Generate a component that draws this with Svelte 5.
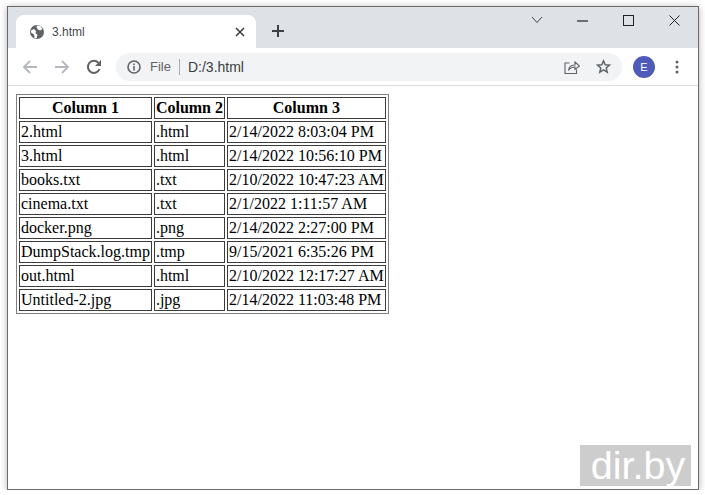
<script>
  const rows = [
    ['2.html', '.html', '2/14/2022 8:03:04 PM'],
    ['3.html', '.html', '2/14/2022 10:56:10 PM'],
    ['books.txt', '.txt', '2/10/2022 10:47:23 AM'],
    ['cinema.txt', '.txt', '2/1/2022 1:11:57 AM'],
    ['docker.png', '.png', '2/14/2022 2:27:00 PM'],
    ['DumpStack.log.tmp', '.tmp', '9/15/2021 6:35:26 PM'],
    ['out.html', '.html', '2/10/2022 12:17:27 AM'],
    ['Untitled-2.jpg', '.jpg', '2/14/2022 11:03:48 PM']
  ];
</script>

<div class="window">
  <div class="tabstrip">
    <div class="tab">
      <svg class="globe" width="16" height="16" viewBox="0 0 16 16">
        <circle cx="8" cy="8" r="7" fill="#5f6368" />
        <path d="M2 6.5 L5 5 L7 7 L6.5 9 L8.5 11 L7.5 14.5 L5.5 14 L5 10.5 L2 8.5 Z M8 1.5 L11.5 2 L13.5 5 L11 6.5 L9 5.5 L7.5 3.5 Z" fill="#fff" />
      </svg>
      <span class="tabtitle">3.html</span>
      <svg class="tabclose" width="10" height="10" viewBox="0 0 10 10">
        <path d="M1 1 L9 9 M9 1 L1 9" stroke="#3c4043" stroke-width="1.6" fill="none" />
      </svg>
    </div>
    <svg class="newtab" width="14" height="14" viewBox="0 0 14 14">
      <path d="M7 1 V13 M1 7 H13" stroke="#3c4043" stroke-width="2" fill="none" />
    </svg>
    <div class="winctrls">
      <svg class="chev" width="12" height="8" viewBox="0 0 12 8"><path d="M1 1 L6 6.5 L11 1" stroke="#444" fill="none" /></svg>
      <svg class="min" width="11" height="2" viewBox="0 0 11 2"><path d="M0 1 H11" stroke="#222" stroke-width="1.2" /></svg>
      <svg class="max" width="11" height="11" viewBox="0 0 11 11"><rect x="0.5" y="0.5" width="10" height="10" stroke="#222" fill="none" /></svg>
      <svg class="cls" width="11" height="11" viewBox="0 0 11 11"><path d="M0.5 0.5 L10.5 10.5 M10.5 0.5 L0.5 10.5" stroke="#222" fill="none" /></svg>
    </div>
  </div>
  <div class="toolbar">
    <svg class="nav" width="16" height="16" viewBox="0 0 16 16"><path d="M15 8 H2 M8 2 L2 8 L8 14" stroke="#b4b7bb" stroke-width="1.8" fill="none" /></svg>
    <svg class="nav" width="16" height="16" viewBox="0 0 16 16"><path d="M1 8 H14 M8 2 L14 8 L8 14" stroke="#b4b7bb" stroke-width="1.8" fill="none" /></svg>
    <svg class="nav" width="16" height="16" viewBox="0 0 16 16"><path d="M13.5 10 A6 6 0 1 1 12.3 3.8" stroke="#5f6368" stroke-width="2" fill="none" /><path d="M15 1 V7 H9 Z" fill="#5f6368" /></svg>
    <div class="omnibox">
      <svg width="14" height="14" viewBox="0 0 14 14">
        <circle cx="7" cy="7" r="6" stroke="#5f6368" stroke-width="1.6" fill="none" />
        <path d="M7 6 V10.5 M7 3.4 V5" stroke="#5f6368" stroke-width="1.6" fill="none" />
      </svg>
      <span class="file">File</span>
      <span class="sep"></span>
      <span class="url">D:/3.html</span>
      <span class="spacer"></span>
      <svg class="share" width="16" height="16" viewBox="0 0 16 16">
        <path d="M5.5 4 H1 V14.5 H12.5 V10.5" stroke="#5f6368" stroke-width="1.1" fill="none" />
        <path d="M4.5 11.5 C5 7.5 8 6 11 6 V3 L15.5 7 L11 10.5 V8 C8.5 8 6 9 4.5 11.5 Z" stroke="#5f6368" stroke-width="1.1" fill="none" />
      </svg>
      <svg class="star" width="15" height="15" viewBox="0 0 15 15">
        <path d="M7.5 1.8 L9.2 5.7 L13.5 6.1 L10.2 8.9 L11.2 13.1 L7.5 10.9 L3.8 13.1 L4.8 8.9 L1.5 6.1 L5.8 5.7 Z" stroke="#5f6368" stroke-width="1.5" fill="none" />
      </svg>
    </div>
    <div class="avatar">E</div>
    <svg class="menu" width="4" height="14" viewBox="0 0 4 14">
      <circle cx="2" cy="2" r="1.5" fill="#5f6368" />
      <circle cx="2" cy="7" r="1.5" fill="#5f6368" />
      <circle cx="2" cy="12" r="1.5" fill="#5f6368" />
    </svg>
  </div>
  <div class="page">
    <table>
      <thead>
        <tr><th>Column 1</th><th>Column 2</th><th>Column 3</th></tr>
      </thead>
      <tbody>
        {#each rows as row}
          <tr>{#each row as cell}<td>{cell}</td>{/each}</tr>
        {/each}
      </tbody>
    </table>
    <div class="mark">dir.by</div>
  </div>
</div>

<style>
  :global(body) {
    margin: 0;
    background: #fff;
  }
  .window {
    position: relative;
    box-sizing: border-box;
    width: 692px;
    height: 484px;
    margin: 6px 0 0 7px;
    border: 1px solid #6a6a6a;
    box-shadow: 0 1px 7px rgba(0, 0, 0, 0.3);
    background: #fff;
    overflow: hidden;
    display: flex;
    flex-direction: column;
  }
  .tabstrip {
    height: 41px;
    flex: none;
    box-sizing: border-box;
    background: #dee1e6;
    padding: 8px 0 0 8px;
    display: flex;
    align-items: flex-start;
    position: relative;
  }
  .tab {
    width: 240px;
    height: 33px;
    box-sizing: border-box;
    background: #fff;
    border-radius: 8px 8px 0 0;
    display: flex;
    align-items: center;
    padding: 0 11px 0 13px;
    font: 12px "Liberation Sans", Arial, sans-serif;
    color: #45474a;
  }
  .tabtitle {
    margin-left: 7px;
    flex: 1;
  }
  .newtab {
    margin: 9px 0 0 15px;
  }
  .winctrls {
    position: absolute;
    right: 0;
    top: 0;
    width: 170px;
    height: 30px;
  }
  .winctrls svg {
    position: absolute;
  }
  .chev { left: 3px; top: 9px; }
  .min { left: 49px; top: 13px; }
  .max { left: 95px; top: 8px; }
  .cls { left: 141px; top: 8px; }
  .toolbar {
    height: 38px;
    flex: none;
    box-sizing: border-box;
    border-bottom: 1px solid #dadce0;
    display: flex;
    align-items: center;
    padding: 0 0 0 14px;
  }
  .nav {
    margin-right: 16px;
  }
  .nav:nth-child(3) {
    margin-right: 14px;
  }
  .omnibox {
    width: 506px;
    height: 28px;
    box-sizing: border-box;
    background: #f1f3f4;
    border-radius: 14px;
    display: flex;
    align-items: center;
    padding: 0 11px 0 11px;
    font: 14px "Liberation Sans", Arial, sans-serif;
    color: #202124;
  }
  .file {
    margin-left: 9px;
    color: #5f6368;
    font-size: 13px;
  }
  .sep {
    width: 1px;
    height: 16px;
    background: #a9acb0;
    margin: 0 8px 0 8px;
  }
  .url {
    font-size: 14px;
    color: #3c4043;
  }
  .spacer {
    flex: 1;
  }
  .share {
    margin-right: 16px;
  }
  .star {
    margin-right: 0;
  }
  .avatar {
    width: 22px;
    height: 22px;
    border-radius: 50%;
    background: #4e5bb8;
    color: #fff;
    font: 11px "Liberation Sans", Arial, sans-serif;
    display: flex;
    align-items: center;
    justify-content: center;
    margin-left: 11px;
  }
  .menu {
    margin-left: 20px;
  }
  .page {
    flex: 1;
    padding: 8px;
    position: relative;
  }
  table {
    border: 1px solid #808080;
    border-spacing: 2px;
    border-collapse: separate;
    font: 16px "Liberation Serif", "Times New Roman", serif;
    color: #000;
  }
  th,
  td {
    border: 1px solid #3c3c3c;
    padding: 1px;
  }
  th {
    font-weight: bold;
    text-align: center;
  }
  td {
    text-align: left;
  }
  .mark {
    position: absolute;
    right: 7px;
    bottom: 3px;
    box-sizing: border-box;
    width: 111px;
    height: 41px;
    padding-left: 5px;
    background: #cdcdcd;
    color: #fff;
    font: 39.5px/40px "Liberation Sans", Arial, sans-serif;
    text-align: center;
  }
</style>
